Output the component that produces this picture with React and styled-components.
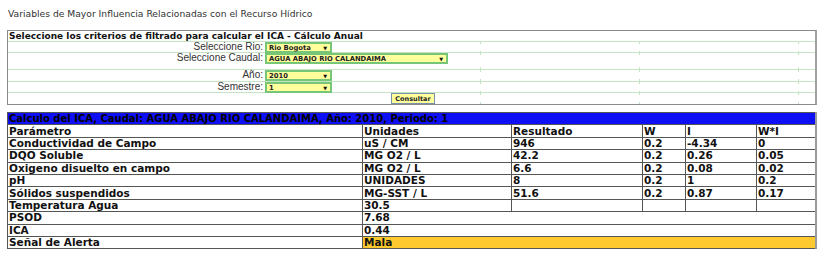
import React from 'react'
import styled, { createGlobalStyle } from 'styled-components'

const GlobalStyle = createGlobalStyle`
  body {
    margin: 0;
    background: #fff;
    font-family: "DejaVu Sans", Verdana, sans-serif;
    color: #333;
  }
`

const Page = styled.div`
  width: 810px;
  padding: 0 7px;
`

const Title = styled.div`
  font-size: 9.2px;
  height: 28px;
  padding-top: 2px;
  line-height: 23px;
  padding-left: 1px;
  color: #333;
`

const FilterBox = styled.div`
  border: 1px solid #8a8a8a;
  border-right: 2px solid #a0a0a0;
  box-sizing: border-box;
  width: 810px;
`

const FilterRow = styled.div`
  display: grid;
  grid-template-columns: 256px 216px 159px 159px 1fr;
  box-sizing: border-box;
  height: ${p => p.h || 11}px;
  border-bottom: 1px solid #c4e4c4;
  &:last-child { border-bottom: none; }
`

const FilterHead = styled.div`
  grid-column: 1 / -1;
  font-weight: bold;
  font-size: 9px;
  line-height: 10px;
  color: #111;
  padding-left: 1px;
`

const Label = styled.div`
  text-align: right;
  font-family: "Liberation Sans", Arial, sans-serif;
  font-size: 10px;
  line-height: 10px;
  color: #333;
  padding-right: 1px;
`

const Control = styled.div`
  display: flex;
  align-items: flex-start;
  padding-left: 1px;
`

const Empty = styled.div`
  background:
    linear-gradient(#c4e4c4, #c4e4c4) left top / 1px 2px no-repeat,
    linear-gradient(#c4e4c4, #c4e4c4) left bottom / 1px 2px no-repeat;
`

const FakeSelect = styled.div`
  box-sizing: border-box;
  width: ${p => p.w}px;
  height: 11px;
  background: #ffff9c;
  border: 2px solid #77c677;
  display: flex;
  align-items: center;
  justify-content: space-between;
  padding: 0 3px 0 2px;
  font-size: 6.8px;
  font-weight: bold;
  color: #222;
`

const Arrow = styled.span`
  font-size: 5px;
  color: #111;
`

const Button = styled.div`
  box-sizing: border-box;
  margin-left: 126px;
  width: 44px;
  height: 11px;
  background: #ffff9c;
  border: 1px solid #7b8fae;
  font-size: 6.5px;
  font-weight: bold;
  color: #222;
  display: flex;
  align-items: center;
  justify-content: center;
`

const Result = styled.table`
  margin-top: 7px;
  width: 810px;
  border-collapse: collapse;
  table-layout: fixed;
  border: 1px solid #777;
  border-right: 2px solid #9a9a9a;
  font-weight: bold;
  font-size: 10.5px;
  color: #111;
`

const Row = styled.tr`
  height: 12.4px;
`

const Cell = styled.td`
  border: 1px solid #555;
  padding: 0 0 0 1px;
  line-height: 11px;
  white-space: nowrap;
  overflow: hidden;
  background: ${p => p.bg || 'transparent'};
`

const Caption = styled.td`
  background: #0f0ff5;
  color: #000;
  font-size: 10px;
  border: 1px solid #555;
  padding: 0 0 0 1px;
  line-height: 11px;
  white-space: nowrap;
`

const filters = [
  { label: 'Seleccione Rio:', value: 'Rio Bogota', w: 67 },
  { label: 'Seleccione Caudal:', value: 'AGUA ABAJO RIO CALANDAIMA', w: 183, h: 17 },
  { label: 'Año:', value: '2010', w: 67, h: 12 },
  { label: 'Semestre:', value: '1', w: 67 },
]

const rows = [
  ['Conductividad de Campo', 'uS / CM', '946', '0.2', '-4.34', '0'],
  ['DQO Soluble', 'MG O2 / L', '42.2', '0.2', '0.26', '0.05'],
  ['Oxigeno disuelto en campo', 'MG O2 / L', '6.6', '0.2', '0.08', '0.02'],
  ['pH', 'UNIDADES', '8', '0.2', '1', '0.2'],
  ['Sólidos suspendidos', 'MG-SST / L', '51.6', '0.2', '0.87', '0.17'],
  ['Temperatura Agua', '30.5', '', '', '', ''],
]

const summary = [
  { name: 'PSOD', value: '7.68' },
  { name: 'ICA', value: '0.44' },
  { name: 'Señal de Alerta', value: 'Mala', bg: '#fdc92e' },
]

export default function App() {
  return (
    <Page>
      <GlobalStyle />
      <Title>Variables de Mayor Influencia Relacionadas con el Recurso Hídrico</Title>
      <FilterBox>
        <FilterRow>
          <FilterHead>Seleccione los criterios de filtrado para calcular el ICA - Cálculo Anual</FilterHead>
        </FilterRow>
        {filters.map(f => (
          <FilterRow key={f.label} h={f.h}>
            <Label>{f.label}</Label>
            <Control>
              <FakeSelect w={f.w}>{f.value}<Arrow>▼</Arrow></FakeSelect>
            </Control>
            <Empty /><Empty /><Empty />
          </FilterRow>
        ))}
        <FilterRow>
          <div />
          <Control><Button>Consultar</Button></Control>
          <Empty /><Empty /><Empty />
        </FilterRow>
      </FilterBox>
      <Result>
        <colgroup>
          <col style={{ width: 355 }} />
          <col style={{ width: 149 }} />
          <col style={{ width: 131 }} />
          <col style={{ width: 43 }} />
          <col style={{ width: 71 }} />
          <col />
        </colgroup>
        <tbody>
          <Row><Caption colSpan={6}>Calculo del ICA, Caudal: AGUA ABAJO RIO CALANDAIMA, Año: 2010, Periodo: 1</Caption></Row>
          <Row>
            <Cell>Parámetro</Cell><Cell>Unidades</Cell><Cell>Resultado</Cell><Cell>W</Cell><Cell>I</Cell><Cell>W*I</Cell>
          </Row>
          {rows.map(r => (
            <Row key={r[0]}>{r.map((c, i) => <Cell key={i}>{c}</Cell>)}</Row>
          ))}
          {summary.map(s => (
            <Row key={s.name}>
              <Cell>{s.name}</Cell>
              <Cell colSpan={5} bg={s.bg}>{s.value}</Cell>
            </Row>
          ))}
        </tbody>
      </Result>
    </Page>
  )
}
